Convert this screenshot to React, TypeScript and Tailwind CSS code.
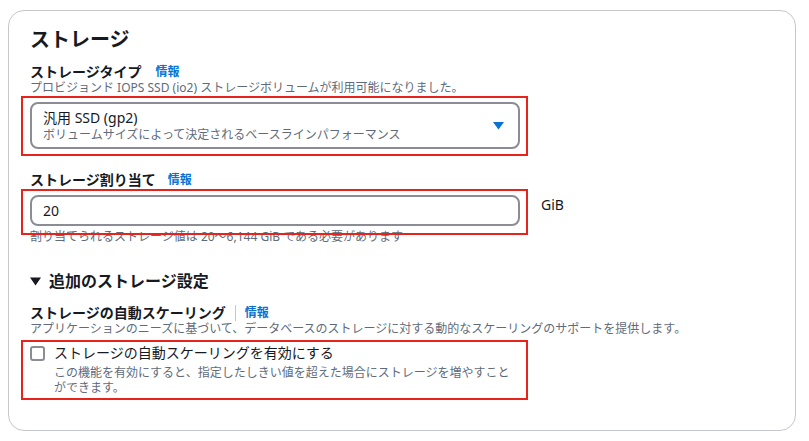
const font = { fontFamily: '"Noto Sans", "Noto Sans CJK JP", sans-serif' }

function InfoLink() {
  return <span className="text-[12px] font-bold leading-[16px] text-[#0972d3]">情報</span>
}

function Highlight({ className }: { className: string }) {
  return <div className={`pointer-events-none absolute border-2 border-[#e8231c] ${className}`} />
}

export default function App() {
  return (
    <div className="min-h-[441px] w-[809px] bg-white pt-[10px] pl-[8px] text-[#16191f]" style={font}>
      <div className="h-[421px] w-[788px] rounded-2xl border border-[#c6c6cd] pl-[21px] pt-[17px]">
        <h2 className="text-[20px] font-bold leading-[24px]">ストレージ</h2>

        {/* ストレージタイプ */}
        <div className="mt-[12px] flex items-center gap-[14px]">
          <span className="text-[14px] font-bold leading-[16px]">ストレージタイプ</span>
          <InfoLink />
        </div>
        <p className="text-[12px] leading-[16px] text-[#5f6b7a]">
          プロビジョンド IOPS SSD (io2) ストレージボリュームが利用可能になりました。
        </p>
        <div className="relative mt-[6px] w-[490px]">
          <div className="flex h-[47px] items-center justify-between rounded-lg border-2 border-[#8c8c94] pl-[11px] pr-[14px]">
            <div>
              <div className="text-[14px] leading-[18px]">汎用 SSD (gp2)</div>
              <div className="text-[12px] leading-[16px] text-[#5f6b7a]">
                ボリュームサイズによって決定されるベースラインパフォーマンス
              </div>
            </div>
            <svg width="11" height="8" viewBox="0 0 11 8">
              <path d="M0 0h11L5.5 7.5z" fill="#0972d3" />
            </svg>
          </div>
          <Highlight className="-top-[6px] -bottom-[7px] -left-[9px] -right-[8px]" />
        </div>

        {/* ストレージ割り当て */}
        <div className="mt-[22px] flex items-center gap-[12px]">
          <span className="text-[14px] font-bold leading-[18px]">ストレージ割り当て</span>
          <InfoLink />
        </div>
        <div className="mt-[6px] flex items-start gap-[21px]">
          <div className="relative w-[490px]">
            <div className="flex h-[31px] items-center rounded-lg border-2 border-[#8c8c94] pl-[11px] text-[14px]">
              20
            </div>
            <Highlight className="-top-[6px] -bottom-[9px] -left-[9px] -right-[8px]" />
          </div>
          <span className="mt-[1px] text-[14px] leading-[18px]">GiB</span>
        </div>
        <p className="mt-[4px] text-[12px] leading-[14px] text-[#5f6b7a]">
          割り当てられるストレージ値は 20〜6,144 GiB である必要があります
        </p>

        {/* 追加のストレージ設定 */}
        <div className="mt-[26px] flex items-center gap-[8px]">
          <svg width="11" height="9" viewBox="0 0 11 9">
            <path d="M0 0.5h11L5.5 8.5z" fill="#16191f" />
          </svg>
          <span className="text-[16px] font-bold leading-[22px]">追加のストレージ設定</span>
        </div>

        <div className="mt-[13px] flex items-center">
          <span className="text-[14px] font-bold leading-[16px]">ストレージの自動スケーリング</span>
          <span className="mx-[9px] h-[16px] border-l border-[#c6c6cd]" />
          <InfoLink />
        </div>
        <p className="text-[12px] leading-[16px] text-[#5f6b7a]">
          アプリケーションのニーズに基づいて、データベースのストレージに対する動的なスケーリングのサポートを提供します。
        </p>

        <div className="relative mt-[7px] flex w-[490px] gap-[9px]">
          <div className="mt-[2px] h-[15px] w-[15px] shrink-0 rounded-[3px] border-2 border-[#8c8c94]" />
          <div>
            <div className="text-[14px] leading-[18px]">ストレージの自動スケーリングを有効にする</div>
            <div className="mt-[3px] w-[466px] text-[12px] leading-[15px] text-[#5f6b7a]">
              この機能を有効にすると、指定したしきい値を超えた場合にストレージを増やすことができます。
            </div>
          </div>
          <Highlight className="-top-[4px] -bottom-[5px] -left-[9px] -right-[8px]" />
        </div>
      </div>
    </div>
  )
}
